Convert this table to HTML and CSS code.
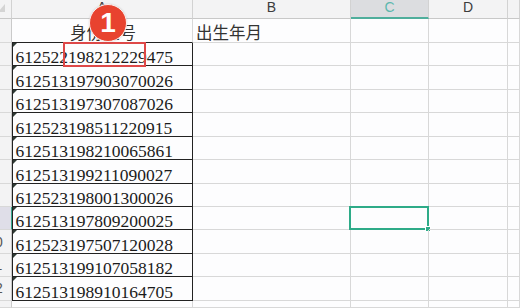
FILE: index.html
```html
<!DOCTYPE html>
<html lang="zh">
<head>
<meta charset="utf-8">
<title>身份证号</title>
<link rel="stylesheet" href="styles.css">
</head>
<body>
<div class="sheet">
  <div class="c ch corner"><span class="tri"></span></div>
  <div class="c ch">A</div>
  <div class="c ch">B</div>
  <div class="c ch sel">C</div>
  <div class="c ch">D</div>
  <div class="c ch"></div>

  <div class="c rh"><span class="rn">1</span></div>
  <div class="c title">身份证号</div>
  <div class="c txt">出生年月</div>
  <div class="c"></div>
  <div class="c"></div>
  <div class="c"></div>

  <div class="c rh"><span class="rn">2</span></div>
  <div class="c id"><i class="flag"></i>612522198212229475<span class="mark"></span></div>
  <div class="c"></div><div class="c"></div><div class="c"></div><div class="c"></div>

  <div class="c rh"><span class="rn">3</span></div>
  <div class="c id"><i class="flag"></i>612513197903070026</div>
  <div class="c"></div><div class="c"></div><div class="c"></div><div class="c"></div>

  <div class="c rh"><span class="rn">4</span></div>
  <div class="c id"><i class="flag"></i>612513197307087026</div>
  <div class="c"></div><div class="c"></div><div class="c"></div><div class="c"></div>

  <div class="c rh"><span class="rn">5</span></div>
  <div class="c id"><i class="flag"></i>612523198511220915</div>
  <div class="c"></div><div class="c"></div><div class="c"></div><div class="c"></div>

  <div class="c rh"><span class="rn">6</span></div>
  <div class="c id"><i class="flag"></i>612513198210065861</div>
  <div class="c"></div><div class="c"></div><div class="c"></div><div class="c"></div>

  <div class="c rh"><span class="rn">7</span></div>
  <div class="c id"><i class="flag"></i>612513199211090027</div>
  <div class="c"></div><div class="c"></div><div class="c"></div><div class="c"></div>

  <div class="c rh"><span class="rn">8</span></div>
  <div class="c id"><i class="flag"></i>612523198001300026</div>
  <div class="c"></div><div class="c"></div><div class="c"></div><div class="c"></div>

  <div class="c rh cur"><span class="rn">9</span></div>
  <div class="c id"><i class="flag"></i>612513197809200025</div>
  <div class="c"></div>
  <div class="c active"><span class="selbox"><span class="handle"></span></span></div>
  <div class="c"></div><div class="c"></div>

  <div class="c rh"><span class="rn">10</span></div>
  <div class="c id"><i class="flag"></i>612523197507120028</div>
  <div class="c"></div><div class="c"></div><div class="c"></div><div class="c"></div>

  <div class="c rh"><span class="rn">11</span></div>
  <div class="c id"><i class="flag"></i>612513199107058182</div>
  <div class="c"></div><div class="c"></div><div class="c"></div><div class="c"></div>

  <div class="c rh"><span class="rn">12</span></div>
  <div class="c id"><i class="flag"></i>612513198910164705</div>
  <div class="c"></div><div class="c"></div><div class="c"></div><div class="c"></div>

  <div class="c rh"></div>
  <div class="c"></div><div class="c"></div><div class="c"></div><div class="c"></div><div class="c"></div>
</div>
<div class="badge">1</div>
</body>
</html>
```
FILE: styles.css
```css
html, body {
  margin: 0;
  padding: 0;
  background: #fdfdfe;
  overflow: hidden;
}
body {
  width: 520px;
  height: 308px;
  position: relative;
  font-family: "Liberation Sans", Arial, sans-serif;
}
.sheet {
  display: grid;
  grid-template-columns: 12px 181px 158px 78px 79px 1fr;
  grid-template-rows: 19px 24px repeat(11, 23.43px) 1fr;
  width: 520px;
  height: 308px;
  overflow: hidden;
}
.c {
  box-sizing: border-box;
  border-right: 1px solid #d8d8d8;
  border-bottom: 1px solid #d8d8d8;
  position: relative;
  display: flex;
  min-width: 0;
}
.ch {
  background: #f3f3f4;
  border-right-color: #d2d2d2;
  border-bottom-color: #c8c8c8;
  justify-content: center;
  align-items: flex-start;
  font-size: 14px;
  line-height: 14px;
  color: #3c3c3c;
}
.ch.sel {
  background: #dcdde0;
  color: #5cb8ae;
  border-bottom: 2px solid #4fae9c;
}
.corner {
  overflow: hidden;
}
.tri {
  position: absolute;
  left: 0;
  top: 4px;
  width: 0;
  height: 0;
  border-left: 7px solid transparent;
  border-bottom: 8px solid #d4d4d4;
  transform: translateX(-2px);
}
.rh {
  background: #f3f3f4;
  border-right-color: #cacaca;
  overflow: hidden;
  align-items: center;
  font-size: 14px;
  line-height: 14px;
  color: #555;
}
.rh.cur {
  background: #dfdee8;
  border-right: 1px solid #39a88e;
}
.rn {
  flex: none;
  width: 30px;
  margin-left: -20px;
  text-align: center;
}
.title {
  justify-content: center;
  align-items: flex-end;
  padding-bottom: 2px;
  font-family: "Noto Sans CJK SC", "Noto Sans", sans-serif;
  font-size: 16.5px;
  line-height: 16px;
  color: #333;
  border-bottom: 1px solid #222;
  padding-left: 2px;
}
.txt {
  align-items: flex-end;
  padding-left: 3px;
  padding-bottom: 2px;
  font-family: "Noto Sans CJK SC", "Noto Sans", sans-serif;
  font-size: 16.5px;
  line-height: 16px;
  color: #333;
}
.id {
  border-left: 1px solid #222;
  border-right: 1px solid #222;
  border-bottom: 1px solid #222;
  align-items: flex-end;
  padding-left: 2.5px;
  font-family: "Liberation Serif", "Times New Roman", serif;
  font-size: 17.5px;
  line-height: 16px;
  color: #1b1b1b;
}
.flag {
  position: absolute;
  left: 0;
  top: 0;
  width: 0;
  height: 0;
  border-top: 4px solid #2f3a34;
  border-right: 4px solid transparent;
}
.mark {
  position: absolute;
  left: 50px;
  top: -1px;
  width: 83px;
  height: 25px;
  box-sizing: border-box;
  border: 2px solid #de4848;
}
.selbox {
  position: absolute;
  left: -2px;
  top: -1px;
  right: -1px;
  bottom: -1px;
  border: 2px solid #2eab88;
}
.handle {
  position: absolute;
  right: -4px;
  bottom: -4px;
  width: 4px;
  height: 4px;
  background: #2eab88;
  border: 1px solid #fff;
}
.badge {
  position: absolute;
  left: 89px;
  top: 4px;
  width: 36px;
  height: 36px;
  border-radius: 50%;
  background: #e8432f;
  border: 1.5px solid #fdf1ef;
  box-shadow: 0 0 2px rgba(0,0,0,0.15);
  color: #fff;
  font-family: "Liberation Sans", Arial, sans-serif;
  font-weight: bold;
  font-size: 28px;
  line-height: 36px;
  text-align: center;
}
```
